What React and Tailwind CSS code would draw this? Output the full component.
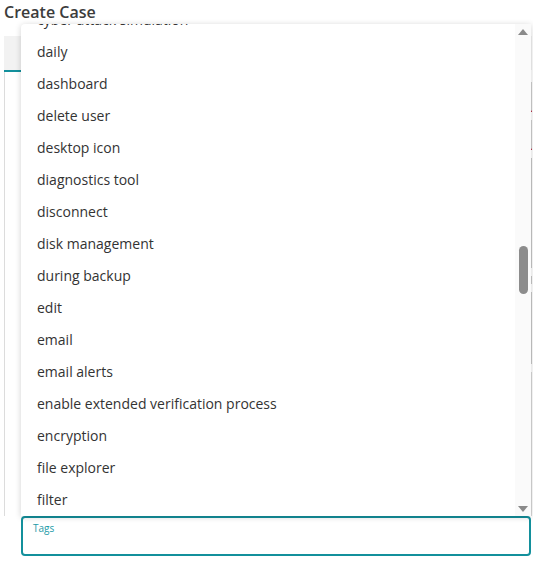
import { useState } from "react";

const tags = [
    "cyber attack simulation",
    "daily",
    "dashboard",
    "delete user",
    "desktop icon",
    "diagnostics tool",
    "disconnect",
    "disk management",
    "during backup",
    "edit",
    "email",
    "email alerts",
    "enable extended verification process",
    "encryption",
    "file explorer",
    "filter",
    "firewall"
];

function App() {

    const [value, setValue] = useState("");

    return (

        <div className="w-[533px] h-[566px] bg-white overflow-hidden font-['Open_Sans',sans-serif]">

            <h1 className="pl-[4px] pt-[1px] h-[24px] text-[16px] leading-[22px] font-semibold text-[#3c3c3c]">
                Create Case
            </h1>

            {/* Form behind the menu */}

            <div className="ml-[4px] mt-[12px] w-[528px]">

                <div className="h-[34px] bg-[#f2f2f2]"></div>
                <div className="h-[2px] w-[18px] bg-[#13909c]"></div>

                <div className="border-l border-[#dcdcdc] h-[444px] pl-[17px] pt-[10px] flex flex-col gap-[8px]">
                    <div className="h-[30px] border-r border-b-2 border-r-[#d0d0d0] border-b-[#b5001f]"></div>
                    <div className="h-[30px] border-r border-b-2 border-r-[#d0d0d0] border-b-[#b5001f]"></div>
                    <div className="h-[110px] border-r border-b border-[#c8c8c8]"></div>
                    <div className="h-[8px] border-r border-b border-[#c8c8c8]"></div>
                    <div className="h-[72px] border-r border-b border-[#c8c8c8]"></div>
                    <div className="flex-1 border-r border-[#d8d8d8]"></div>
                </div>

                {/* Tags */}

                <div className="relative pl-[17px] pb-[10px]">

                    <div className="absolute left-[17px] w-[510px] bottom-full h-[492px] bg-white rounded-tl-[4px] shadow-[0_1px_6px_rgba(0,0,0,0.18)] flex overflow-hidden">

                        <ul className="flex-1 overflow-hidden">
                            <div className="-mt-[21px]">
                                {tags.map((tag) => (
                                    <li
                                        key={tag}
                                        className="h-[32px] pl-[16px] flex items-center text-[14px] text-[#333333] whitespace-nowrap"
                                    >
                                        {tag}
                                    </li>
                                ))}
                            </div>
                        </ul>

                        {/* Scrollbar */}

                        <div className="w-[16px] bg-[#fafafa] flex flex-col items-center">
                            <div className="mt-[5px] w-0 h-0 border-l-[5px] border-r-[5px] border-b-[6px] border-l-transparent border-r-transparent border-b-[#8a8a8a]"></div>
                            <div className="mt-[211px] w-[9px] h-[48px] rounded-full bg-[#8c8c8c]"></div>
                            <div className="flex-1"></div>
                            <div className="mb-[4px] w-0 h-0 border-l-[5px] border-r-[5px] border-t-[6px] border-l-transparent border-r-transparent border-t-[#8a8a8a]"></div>
                        </div>

                    </div>

                    <label className="block w-[510px] h-[40px] border-2 border-[#13909c] rounded-[4px] px-[10px] pt-[4px]">
                        <span className="block text-[10px] leading-[12px] text-[#1b9aa7]">
                            Tags
                        </span>
                        <input
                            type="text"
                            value={value}
                            onChange={(event) => setValue(event.target.value)}
                            className="w-full text-[13px] outline-none bg-transparent"
                        />
                    </label>

                </div>

            </div>

        </div>

    );

}

export default App;
